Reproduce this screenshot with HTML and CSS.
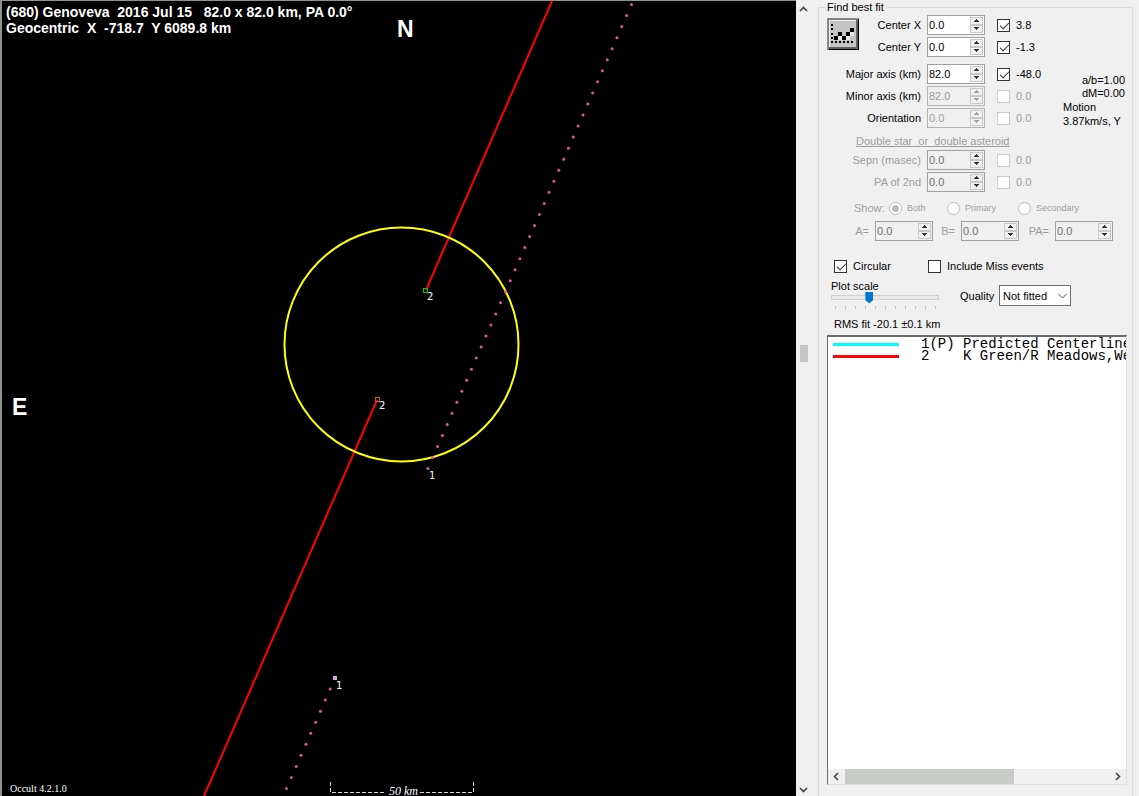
FILE: index.html
```html
<!DOCTYPE html>
<html lang="en">
<head>
<meta charset="utf-8">
<title>Occult - Genoveva</title>
<link rel="stylesheet" href="styles.css">
</head>
<body>
<svg width="0" height="0" class="defs" aria-hidden="true">
  <symbol id="up" viewBox="0 0 7 4"><path d="M3 0h1v1h1v1h1v1H1V2h1V1h1z" fill="currentColor"/></symbol>
  <symbol id="down" viewBox="0 0 7 4"><path d="M1 0h5v1H5v1H4v1H3V2H2V1H1z" fill="currentColor"/></symbol>
</svg>
<main class="app">
  <section class="plot" aria-label="Occultation plot">
    <svg class="plot-canvas" viewBox="0 0 796 796" preserveAspectRatio="xMinYMin meet">
      <g class="plot-title">
        <text x="6" y="17" xml:space="preserve">(680) Genoveva  2016 Jul 15   82.0 x 82.0 km, PA 0.0°</text>
        <text x="6" y="33" xml:space="preserve">Geocentric  X  -718.7  Y 6089.8 km</text>
      </g>
      <text class="compass" x="397" y="37">N</text>
      <text class="compass" x="12" y="415">E</text>
      <path class="chord" d="M552 1L426 290M377 400L204 796"/>
      <circle class="outline" cx="401.500" cy="344.500" r="117"/>
      <g id="dots" class="dots"></g>
      <rect x="423.500" y="288.500" width="4" height="4" fill="none" stroke="#00c000"/>
      <rect x="375.500" y="397.500" width="4" height="4" fill="none" stroke="#d05040"/>
      <rect x="333" y="676" width="4" height="4" fill="#e0a0e0"/>
      <g class="tag">
        <text x="427" y="300">2</text>
        <text x="379" y="409">2</text>
        <text x="429" y="479">1</text>
        <text x="336" y="689">1</text>
      </g>
      <path class="scale" d="M330.500 782V792.500H386M420 792.500H473.500V782"/>
      <text class="scale-text" x="389" y="795">50 km</text>
      <text class="version" x="10" y="792">Occult 4.2.1.0</text>
    </svg>
  </section>

  <aside class="side">
    <div class="rail">
      <svg width="9" height="6" viewBox="0 0 9 6"><path d="M1 5L4.500 1.500L8 5" fill="none" stroke="#404048" stroke-width="1.600"/></svg>
      <span class="rail-thumb"></span>
      <svg width="9" height="6" viewBox="0 0 9 6"><path d="M1 1L4.500 4.500L8 1" fill="none" stroke="#404048" stroke-width="1.600"/></svg>
    </div>
    <fieldset class="group">
      <legend>Find best fit</legend>

      <div class="fit">
        <button class="fit-button" type="button" aria-label="Fit to observations">
          <svg width="32" height="32" viewBox="0 0 32 32" shape-rendering="crispEdges">
            <path d="M0 0h32v32H0z" fill="#808080"/><path d="M2 2h28v28H2z" fill="#c4c4c4"/>
            <path d="M0 0h31v1H1v30H0z" fill="#888"/><path d="M2 2h27v1H3v26H2z" fill="#eee"/>
            <path d="M29 2h2v29H2v-2h27z" fill="#606060"/><path d="M31 1h1v31H2v-1h29z" fill="#000"/>
            <path d="M4 6h2v2H4zm0 4h2v2H4zm0 5h2v2H4zm0 4h2v2H4zm0 4h2v2H4zm4 0h2v2H8zm4 0h2v2h-2zm4 0h2v2h-2zm4 0h2v2h-2zm4 0h2v2h-2z" fill="#000"/>
            <path d="M11 18h4v4h-4zM19 18h4v4h-4zM23 14h4v4h-4z" fill="#e8e8e8"/>
            <path d="M7 18h4v4H7zm4-4h4v4h-4zm4 4h4v4h-4zm4-4h4v4h-4zm4-4h4v4h-4z" fill="#000"/>
          </svg>
        </button>
        <label class="l1" for="cx">Center X</label>
        <div class="spin"><input id="cx" value="0.0"><span class="arrows"><button type="button" aria-label="Up"><svg><use href="#up"/></svg></button><button type="button" aria-label="Down"><svg><use href="#down"/></svg></button></span></div>
        <label class="check"><input type="checkbox" checked>3.8</label>

        <label class="l1" for="cy">Center Y</label>
        <div class="spin"><input id="cy" value="0.0"><span class="arrows"><button type="button" aria-label="Up"><svg><use href="#up"/></svg></button><button type="button" aria-label="Down"><svg><use href="#down"/></svg></button></span></div>
        <label class="check"><input type="checkbox" checked>-1.3</label>
      </div>

      <div class="fit axes">
        <label class="l2" for="major">Major axis (km)</label>
        <div class="spin"><input id="major" value="82.0"><span class="arrows"><button type="button" aria-label="Up"><svg><use href="#up"/></svg></button><button type="button" aria-label="Down"><svg><use href="#down"/></svg></button></span></div>
        <label class="check"><input type="checkbox" checked>-48.0</label>

        <label class="l2" for="minor">Minor axis (km)</label>
        <div class="spin off"><input id="minor" value="82.0" disabled><span class="arrows"><button type="button" aria-label="Up" disabled><svg><use href="#up"/></svg></button><button type="button" aria-label="Down" disabled><svg><use href="#down"/></svg></button></span></div>
        <label class="check off"><input type="checkbox" disabled>0.0</label>

        <label class="l2" for="orient">Orientation</label>
        <div class="spin off"><input id="orient" value="0.0" disabled><span class="arrows"><button type="button" aria-label="Up" disabled><svg><use href="#up"/></svg></button><button type="button" aria-label="Down" disabled><svg><use href="#down"/></svg></button></span></div>
        <label class="check off"><input type="checkbox" disabled>0.0</label>

        <div class="facts">
          <p class="right">a/b=1.00</p>
          <p class="right">dM=0.00</p>
          <p class="motion">Motion<br>3.87km/s, Y</p>
        </div>
      </div>

      <h2 class="double">Double star&nbsp; or&nbsp; double asteroid</h2>
      <div class="fit">
        <label class="l2 off" for="sepn">Sepn (masec)</label>
        <div class="spin dim"><input id="sepn" value="0.0" disabled><span class="arrows"><button type="button" aria-label="Up" disabled><svg><use href="#up"/></svg></button><button type="button" aria-label="Down" disabled><svg><use href="#down"/></svg></button></span></div>
        <label class="check off"><input type="checkbox" disabled>0.0</label>

        <label class="l2 off" for="pa2">PA of 2nd</label>
        <div class="spin dim"><input id="pa2" value="0.0" disabled><span class="arrows"><button type="button" aria-label="Up" disabled><svg><use href="#up"/></svg></button><button type="button" aria-label="Down" disabled><svg><use href="#down"/></svg></button></span></div>
        <label class="check off"><input type="checkbox" disabled>0.0</label>
      </div>

      <div class="show off">
        <span>Show:</span>
        <label><input type="radio" name="show" checked disabled>Both</label>
        <label><input type="radio" name="show" disabled>Primary</label>
        <label><input type="radio" name="show" disabled>Secondary</label>
      </div>

      <div class="abp off">
        <label for="a">A=</label>
        <div class="spin dim"><input id="a" value="0.0" disabled><span class="arrows"><button type="button" aria-label="Up" disabled><svg><use href="#up"/></svg></button><button type="button" aria-label="Down" disabled><svg><use href="#down"/></svg></button></span></div>
        <label for="b">B=</label>
        <div class="spin dim"><input id="b" value="0.0" disabled><span class="arrows"><button type="button" aria-label="Up" disabled><svg><use href="#up"/></svg></button><button type="button" aria-label="Down" disabled><svg><use href="#down"/></svg></button></span></div>
        <label for="pa">PA=</label>
        <div class="spin dim"><input id="pa" value="0.0" disabled><span class="arrows"><button type="button" aria-label="Up" disabled><svg><use href="#up"/></svg></button><button type="button" aria-label="Down" disabled><svg><use href="#down"/></svg></button></span></div>
      </div>

      <div class="options">
        <label class="check"><input type="checkbox" checked>Circular</label>
        <label class="check"><input type="checkbox">Include Miss events</label>
      </div>

      <div class="scale-row">
        <div class="zoom">
          <label for="zoom">Plot scale</label>
          <input id="zoom" type="range" min="0" max="100" value="34">
          <div class="ticks"><i></i><i></i><i></i><i></i><i></i><i></i><i></i><i></i><i></i><i></i><i></i></div>
        </div>
        <label class="quality" for="quality">Quality</label>
        <div class="select">
          <select id="quality"><option>Not fitted</option></select>
          <svg width="9" height="6" viewBox="0 0 9 6"><path d="M.5 1L4.500 5L8.500 1" fill="none" stroke="#555"/></svg>
        </div>
      </div>

      <p class="rms">RMS fit -20.1 ±0.1 km</p>

      <div class="list">
        <div class="rows">
          <div class="row"><span class="key cyan"></span><pre>1(P) Predicted Centerline</pre></div>
          <div class="row"><span class="key red"></span><pre>2    K Green/R Meadows,We</pre></div>
        </div>
        <div class="hbar">
          <svg width="6" height="9" viewBox="0 0 6 9"><path d="M5 1L1.500 4.500L5 8" fill="none" stroke="#404048" stroke-width="1.600"/></svg>
          <div class="track"><div class="hthumb"></div></div>
          <svg width="6" height="9" viewBox="0 0 6 9"><path d="M1 1L4.500 4.500L1 8" fill="none" stroke="#404048" stroke-width="1.600"/></svg>
        </div>
      </div>
    </fieldset>
  </aside>
</main>
<script src="plot.js"></script>
</body>
</html>
```
FILE: styles.css
```css
* { box-sizing: border-box; }
body {
  margin: 0;
  background: #f0f0f0;
  color: #000;
  font: 11px/14px "Liberation Sans", Arial, sans-serif;
}
p, h2, pre { margin: 0; }
.defs { position: absolute; }
input, button, select { font: inherit; color: inherit; margin: 0; padding: 0; }

.app { display: flex; height: 100vh; min-height: 600px; }
.plot {
  flex: 1;
  min-width: 0;
  background: #000;
  box-shadow: inset 2px 1px 0 #8c948c;
  overflow: hidden;
}
.plot-canvas { display: block; width: 100%; height: 100%; }
.plot-canvas text { fill: #fff; font-family: "Liberation Sans", sans-serif; }
.plot-title text { font-size: 14px; font-weight: bold; white-space: pre; }
.plot-canvas .compass { font-size: 23px; font-weight: bold; }
.plot-canvas .tag text { font: 10px "DejaVu Sans", sans-serif; }
.plot-canvas .scale-text { font: italic 12px "Liberation Serif", serif; }
.plot-canvas .version { font: 10px "Liberation Serif", serif; }
.chord { stroke: #f00; stroke-width: 2; fill: none; }
.outline { stroke: #ff0; stroke-width: 2; fill: none; }
.dots { fill: #e054a0; }
.scale { stroke: #ddd; stroke-dasharray: 4 2; fill: none; }

.side { display: flex; flex: 0 0 343px; min-width: 0; }
.rail {
  display: flex;
  flex: 0 0 15px;
  flex-direction: column;
  align-items: center;
  justify-content: space-between;
  padding: 6px 0 3px;
}
.rail-thumb { width: 8px; height: 17px; margin-bottom: 92px; background: #c6c6c6; }

.group {
  display: flex;
  flex: 1;
  flex-direction: column;
  min-width: 0;
  margin: 0 6px 0 7px;
  padding: 1px 5px 11px 8px;
  border: 1px solid #dcdcdc;
  border-bottom: 0;
}
legend { padding: 0 2px; margin-left: -2px; }

.fit {
  display: grid;
  grid-template-columns: 32px 56px 58px 54px minmax(0, 1fr);
  grid-auto-rows: 20px;
  gap: 2px 6px;
  align-items: center;
}
.fit > .check { grid-column: 4; margin-left: 6px; white-space: nowrap; }
.fit > .spin { grid-column: 3; }
.l1 { grid-column: 2; text-align: right; white-space: nowrap; }
.l2 { grid-column: 1 / 3; text-align: right; white-space: nowrap; }
.fit-button {
  grid-column: 1;
  grid-row: 1 / 3;
  align-self: start;
  width: 32px;
  height: 32px;
  margin-top: 3px;
  border: 0;
  background: none;
}
.fit-button svg { display: block; }
.axes { margin-top: 7px; }
.facts {
  grid-column: 5;
  grid-row: 1 / 4;
  align-self: end;
  margin-left: 12px;
  line-height: 13px;
  white-space: nowrap;
}
.right { text-align: right; padding-right: 2px; }
.motion { line-height: 14px; }

.spin {
  display: flex;
  width: 58px;
  height: 20px;
  padding: 1px;
  border: 1px solid #9ea0a2;
  background: #fff;
}
.spin input {
  flex: 1;
  min-width: 0;
  width: 0;
  height: 15px;
  border: 0;
  background: transparent;
  outline: 0;
}
.arrows { display: grid; width: 13px; grid-template-rows: 1fr 1fr; }
.arrows button {
  display: flex;
  align-items: center;
  justify-content: center;
  border: 1px solid #c8c8c8;
  background: #f0f0f0;
  color: #333;
}
.arrows svg { width: 7px; height: 4px; }
.spin.off, .spin.dim { background: #f0f0f0; }
.spin.off, .spin.off button, .off { color: #9d9d9d; }
.spin.dim { color: #6d6d6d; }
.spin.off { border-color: #b0b4b4; }

.check { display: flex; align-items: center; gap: 6px; }
.check input {
  position: relative;
  appearance: none;
  width: 13px;
  height: 13px;
  border: 1px solid #333;
  background: #fff;
}
.check input:checked::after {
  content: "";
  position: absolute;
  left: 2px;
  top: 2px;
  width: 8px;
  height: 4px;
  border: solid #333;
  border-width: 0 0 1px 1px;
  transform: rotate(-45deg);
}
.check.off input { border-color: #ccc; }

.double {
  margin: 6px 0 2px 29px;
  color: #9d9d9d;
  font-size: 11px;
  font-weight: normal;
  text-decoration: underline;
}
.show {
  display: grid;
  grid-template-columns: 35px 58px 71px 1fr;
  align-items: center;
  margin: 9px 0 6px 27px;
}
.show label {
  display: flex;
  align-items: center;
  gap: 5px;
  font-size: 9px;
}
.show input {
  appearance: none;
  width: 13px;
  height: 13px;
  border: 1px solid #bcbcbc;
  border-radius: 50%;
  background: #fff;
}
.show input:checked { background: radial-gradient(#bcbcbc 0 3px, #fff 4px); }
.abp {
  display: grid;
  grid-template-columns: 14px 58px 16px 58px 24px 58px;
  column-gap: 6px;
  align-items: center;
  margin-left: 28px;
}
.abp label { text-align: right; }

.options { display: grid; grid-template-columns: 94px 1fr; margin: 18px 0 6px 7px; }
.scale-row { display: flex; align-items: end; margin-left: 4px; }
.zoom { width: 108px; }
.zoom label { display: block; height: 12px; }
.zoom input {
  display: block;
  appearance: none;
  width: 100%;
  height: 12px;
  background: none;
}
.zoom input::-webkit-slider-runnable-track {
  height: 5px;
  border: 1px solid #d0d0d0;
  background: #e8e8e8;
}
.zoom input::-webkit-slider-thumb {
  appearance: none;
  width: 8px;
  height: 12px;
  margin-top: -4px;
  background: #0078d7;
  clip-path: polygon(0 0, 100% 0, 100% 70%, 50% 100%, 0 70%);
}
.ticks { display: flex; justify-content: space-between; padding: 3px 3px 0 4px; }
.ticks i { width: 1px; height: 3px; background: #c0c0c0; }
.quality { width: 34px; margin: 0 5px 6px 21px; }
.select { position: relative; margin-bottom: 3px; }
.select select {
  display: block;
  appearance: none;
  width: 72px;
  height: 21px;
  padding: 0 3px;
  border: 1px solid #707070;
  border-radius: 0;
  background: #fff;
}
.select svg { position: absolute; right: 4px; top: 8px; }
.rms { margin: 8px 0 4px 7px; }

.list {
  display: flex;
  flex: 1;
  flex-direction: column;
  min-height: 0;
  overflow: hidden;
  border: 1px solid #e0e0e0;
  border-top: 2px solid #696969;
  border-left: 1px solid #696969;
  background: #fff;
}
.rows { flex: 1; overflow: hidden; padding: 1px 0 0 5px; }
.row { display: flex; align-items: center; gap: 22px; height: 12px; }
.key { flex: 0 0 66px; height: 3px; }
.cyan { background: #0ff; }
.red { background: #f00; }
.row pre { font: 14px/12px "Liberation Mono", monospace; }
.hbar {
  display: flex;
  align-items: center;
  gap: 6px;
  height: 15px;
  padding: 0 5px;
  background: #f0f0f0;
}
.track { flex: 1; height: 100%; }
.hthumb { width: 64%; height: 100%; background: #c8ccc8; }
```
FILE: plot.js
```js
// Predicted centerline: one dot per time step, either side of the event.
const dots = document.getElementById("dots");
function line(x, y, count) {
  for (let i = 0; i < count; i++) {
    const c = document.createElementNS("http://www.w3.org/2000/svg", "circle");
    c.setAttribute("cx", x - i * 4.85);
    c.setAttribute("cy", y + i * 11.05);
    c.setAttribute("r", 1.5);
    dots.appendChild(c);
  }
}
line(631.5, 4.5, 43);
line(335, 678, 11);
```
